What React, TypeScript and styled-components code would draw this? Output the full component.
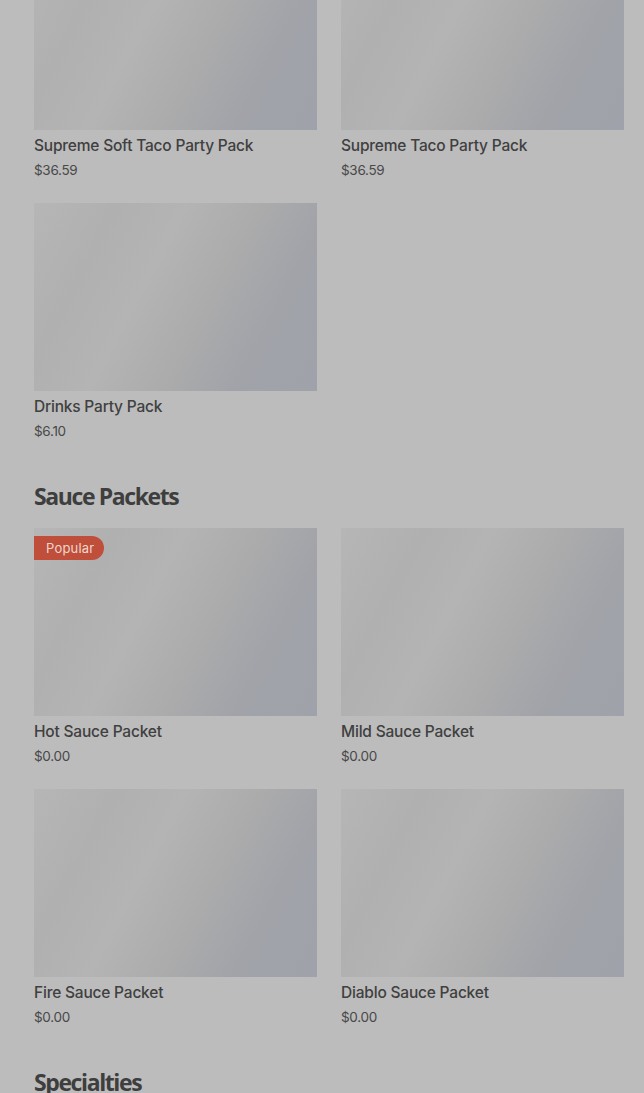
import React from "react";
import styled, { createGlobalStyle } from "styled-components";

const GlobalStyle = createGlobalStyle`
  html, body { margin: 0; padding: 0; background: #bcbcbc; }
  body { font-family: "Inter", "Noto Sans", sans-serif; overflow: hidden; }
`;

const Page = styled.main`
  padding: 0 20px 0 34px;
  margin-top: -58px;
  display: flex;
  flex-direction: column;
  height: 1151px;
  overflow: hidden;
`;

const Section = styled.section`
  display: flex;
  flex-direction: column;
  margin-bottom: 39px;
`;

const Heading = styled.h2`
  margin: 0 0 16px;
  font-family: "Open Sans", "Lato", sans-serif;
  font-size: 23px;
  font-weight: 700;
  letter-spacing: -1.4px;
  line-height: 32px;
  color: #3e3e3e;
`;

const Grid = styled.div`
  display: grid;
  grid-template-columns: 283px 283px;
  column-gap: 24px;
  row-gap: 23px;
`;

const Card = styled.article`
  display: flex;
  flex-direction: column;
`;

const Thumb = styled.div`
  position: relative;
  height: 188px;
  background: linear-gradient(
    118deg,
    #b6b6b6 0%,
    #b0b0b0 22%,
    #b4b4b4 40%,
    #acacac 58%,
    #a1a3a9 78%,
    #9fa2aa 100%
  );
`;

const Badge = styled.span`
  position: absolute;
  top: 8px;
  left: 0;
  height: 24px;
  padding: 0 10px 0 12px;
  display: inline-flex;
  align-items: center;
  background: #bf4f3a;
  color: #efd6cf;
  font-family: "Inter", sans-serif;
  font-size: 13px;
  font-weight: 400;
  letter-spacing: 0.2px;
  border-radius: 0 12px 12px 0;
`;

const Title = styled.div`
  margin-top: 6px;
  font-size: 15.5px;
  font-weight: 500;
  line-height: 20px;
  letter-spacing: -0.2px;
  color: #404040;
`;

const Price = styled.div`
  margin-top: 4px;
  font-size: 13.5px;
  line-height: 20px;
  letter-spacing: -0.3px;
  color: #484848;
`;

type Item = { name: string; price: string; popular?: boolean };

const partyPacks: Item[] = [
  { name: "Supreme Soft Taco Party Pack", price: "$36.59" },
  { name: "Supreme Taco Party Pack", price: "$36.59" },
  { name: "Drinks Party Pack", price: "$6.10" },
];

const sauces: Item[] = [
  { name: "Hot Sauce Packet", price: "$0.00", popular: true },
  { name: "Mild Sauce Packet", price: "$0.00" },
  { name: "Fire Sauce Packet", price: "$0.00" },
  { name: "Diablo Sauce Packet", price: "$0.00" },
];

const ItemCard = ({ item }: { item: Item }) => (
  <Card>
    <Thumb>{item.popular && <Badge>Popular</Badge>}</Thumb>
    <Title>{item.name}</Title>
    <Price>{item.price}</Price>
  </Card>
);

export default function App() {
  return (
    <>
      <GlobalStyle />
      <Page>
        <Section>
          <Grid>
            {partyPacks.map((i) => (
              <ItemCard key={i.name} item={i} />
            ))}
          </Grid>
        </Section>
        <Section>
          <Heading>Sauce Packets</Heading>
          <Grid>
            {sauces.map((i) => (
              <ItemCard key={i.name} item={i} />
            ))}
          </Grid>
        </Section>
        <Section>
          <Heading>Specialties</Heading>
        </Section>
      </Page>
    </>
  );
}
